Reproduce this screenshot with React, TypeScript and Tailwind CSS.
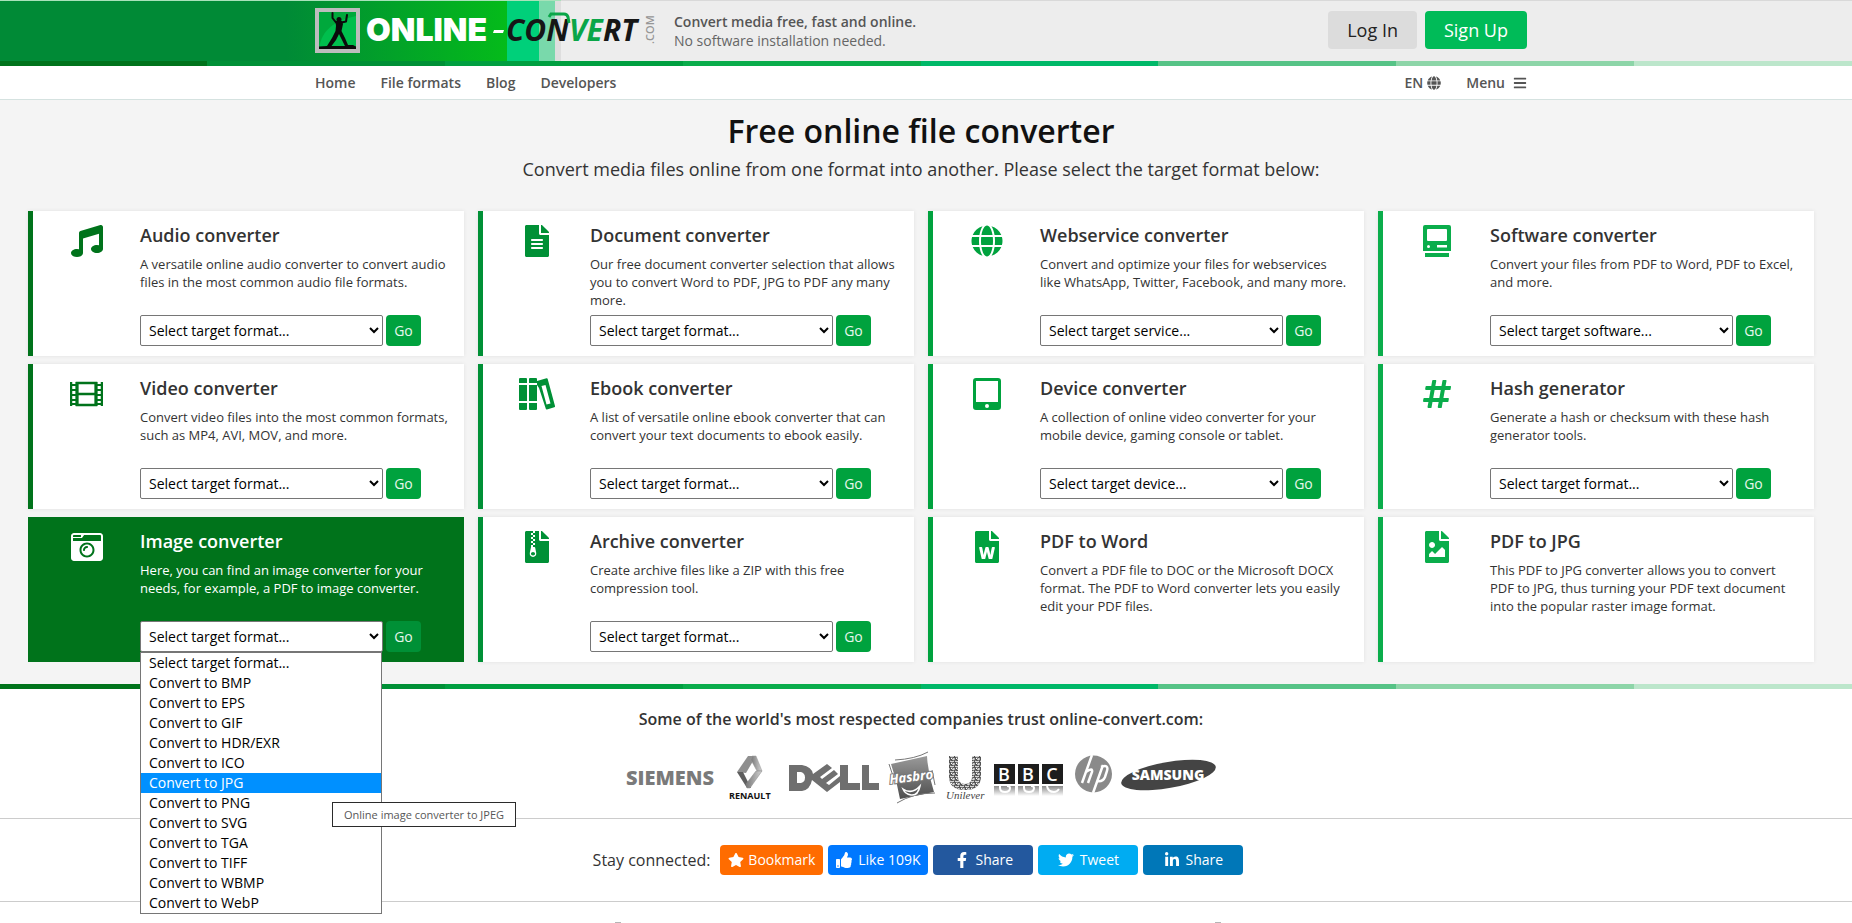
import React, { useState } from 'react';
import {
  FaBars,
  FaCameraRetro,
  FaFacebookF,
  FaFileAlt,
  FaFileArchive,
  FaFileImage,
  FaFileWord,
  FaGlobe,
  FaHashtag,
  FaLinkedinIn,
  FaMusic,
  FaStar,
  FaThumbsUp,
  FaTwitter,
} from 'react-icons/fa';

interface Converter {
  id: string;
  title: string;
  text: string;
  icon: React.ReactNode;
  placeholder?: string;
}

const FilmIcon = () => (
  <svg width="33" height="32" viewBox="0 0 33 32" fill="none" stroke="currentColor" strokeWidth="2">
    <path d="M1 4v24M32 4v24M7 5h19v22H7zM7 16h19" strokeWidth="2.500" />
    <path d="M7 4v24M26 4v24" strokeWidth="3" />
    <path d="M1 7h6M1 12h6M1 17h6M1 22h6M1 26h6M26 7h6M26 12h6M26 17h6M26 22h6M26 26h6" />
  </svg>
);

const BooksIcon = () => (
  <svg width="36" height="32" viewBox="0 0 36 32" fill="currentColor">
    <path d="M1 0h6a1 1 0 0 1 1 1v4H0V1a1 1 0 0 1 1-1zM0 7h8v16H0zM0 25h8v6a1 1 0 0 1-1 1H1a1 1 0 0 1-1-1z" />
    <path d="M11 0h6a1 1 0 0 1 1 1v4h-8V1a1 1 0 0 1 1-1zM10 7h8v16h-8zM10 25h8v6a1 1 0 0 1-1 1h-6a1 1 0 0 1-1-1z" />
    <path
      fillRule="evenodd"
      d="M18 3 27.500 0.300a1 1 0 0 1 1.200.700L36 28a1 1 0 0 1-.700 1.200L28 31.500a1 1 0 0 1-1.200-.700L20 10 18 7zM22.500 8l5 18.500 4-1.100L26.500 7z"
    />
  </svg>
);

const TabletIcon = () => (
  <svg width="28" height="32" viewBox="0 0 28 32" fill="currentColor">
    <path
      fillRule="evenodd"
      d="M3 0h22a3 3 0 0 1 3 3v26a3 3 0 0 1-3 3H3a3 3 0 0 1-3-3V3a3 3 0 0 1 3-3zM3 3v21h22V3zM14 26a2 2 0 1 0 0 4 2 2 0 0 0 0-4z"
    />
  </svg>
);

const ComputerIcon = () => (
  <svg width="28" height="32" viewBox="0 0 28 32" fill="currentColor">
    <path
      fillRule="evenodd"
      d="M2 0h24a2 2 0 0 1 2 2v24H0V2a2 2 0 0 1 2-2zM5 4a1 1 0 0 0-1 1v10a1 1 0 0 0 1 1h18a1 1 0 0 0 1-1V5a1 1 0 0 0-1-1zM5.500 20a1.500 1.500 0 1 0 0 3 1.500 1.500 0 0 0 0-3zM14 20v2.500h10V20z"
    />
    <path d="M2 28h24v4H2z" />
  </svg>
);

const columns: { bar: string; ink: string; items: Converter[] }[] = [
  {
    bar: 'border-[#00731b]',
    ink: 'text-[#00731b]',
    items: [
      {
        id: 'audio',
        title: 'Audio converter',
        text: 'A versatile online audio converter to convert audio files in the most common audio file formats.',
        icon: <FaMusic />,
        placeholder: 'Select target format...',
      },
      {
        id: 'video',
        title: 'Video converter',
        text: 'Convert video files into the most common formats, such as MP4, AVI, MOV, and more.',
        icon: <FilmIcon />,
        placeholder: 'Select target format...',
      },
      {
        id: 'image',
        title: 'Image converter',
        text: 'Here, you can find an image converter for your needs, for example, a PDF to image converter.',
        icon: <FaCameraRetro />,
        placeholder: 'Select target format...',
      },
    ],
  },
  {
    bar: 'border-[#009036]',
    ink: 'text-[#009036]',
    items: [
      {
        id: 'document',
        title: 'Document converter',
        text: 'Our free document converter selection that allows you to convert Word to PDF, JPG to PDF any many more.',
        icon: <FaFileAlt />,
        placeholder: 'Select target format...',
      },
      {
        id: 'ebook',
        title: 'Ebook converter',
        text: 'A list of versatile online ebook converter that can convert your text documents to ebook easily.',
        icon: <BooksIcon />,
        placeholder: 'Select target format...',
      },
      {
        id: 'archive',
        title: 'Archive converter',
        text: 'Create archive files like a ZIP with this free compression tool.',
        icon: <FaFileArchive />,
        placeholder: 'Select target format...',
      },
    ],
  },
  {
    bar: 'border-[#00a23e]',
    ink: 'text-[#00a23e]',
    items: [
      {
        id: 'webservice',
        title: 'Webservice converter',
        text: 'Convert and optimize your files for webservices like WhatsApp, Twitter, Facebook, and many more.',
        icon: <FaGlobe />,
        placeholder: 'Select target service...',
      },
      {
        id: 'device',
        title: 'Device converter',
        text: 'A collection of online video converter for your mobile device, gaming console or tablet.',
        icon: <TabletIcon />,
        placeholder: 'Select target device...',
      },
      {
        id: 'pdf-to-word',
        title: 'PDF to Word',
        text: 'Convert a PDF file to DOC or the Microsoft DOCX format. The PDF to Word converter lets you easily edit your PDF files.',
        icon: <FaFileWord />,
      },
    ],
  },
  {
    bar: 'border-[#0aad4b]',
    ink: 'text-[#0aad4b]',
    items: [
      {
        id: 'software',
        title: 'Software converter',
        text: 'Convert your files from PDF to Word, PDF to Excel, and more.',
        icon: <ComputerIcon />,
        placeholder: 'Select target software...',
      },
      {
        id: 'hash',
        title: 'Hash generator',
        text: 'Generate a hash or checksum with these hash generator tools.',
        icon: <FaHashtag />,
        placeholder: 'Select target format...',
      },
      {
        id: 'pdf-to-jpg',
        title: 'PDF to JPG',
        text: 'This PDF to JPG converter allows you to convert PDF to JPG, thus turning your PDF text document into the popular raster image format.',
        icon: <FaFileImage />,
      },
    ],
  },
];

const imageFormats = [
  'Select target format...',
  'Convert to BMP',
  'Convert to EPS',
  'Convert to GIF',
  'Convert to HDR/EXR',
  'Convert to ICO',
  'Convert to JPG',
  'Convert to PNG',
  'Convert to SVG',
  'Convert to TGA',
  'Convert to TIFF',
  'Convert to WBMP',
  'Convert to WebP',
];

const Stripe = () => (
  <div className="grid h-[5px] grid-cols-[207fr_repeat(6,238fr)_218fr]">
    <span className="bg-[#00731b]" />
    <span className="bg-[#009036]" />
    <span className="bg-[#009f40]" />
    <span className="bg-[#0aac4b]" />
    <span className="bg-[#00b868]" />
    <span className="bg-[#56c386]" />
    <span className="bg-[#8dd5a8]" />
    <span className="bg-[#bce6cb]" />
  </div>
);

const Logo = () => (
  <svg width="345" height="46" viewBox="0 0 345 46" role="img" aria-label="Online-Convert.com">
    <rect width="45" height="45" fill="#bdbdbd" />
    <rect x="4" y="4" width="37" height="37" fill="#00a83c" />
    <path d="M4 41C6 26 14 14 41 8v33z" fill="#00bf4d" />
    <circle cx="24" cy="11.500" r="2.500" fill="#0b0b0b" />
    <path
      d="M21 14.500 17.500 10 17.500 5M26.500 14.500 31 13.500 32 7"
      fill="none"
      stroke="#0b0b0b"
      strokeWidth="2"
      strokeLinecap="round"
      strokeLinejoin="round"
    />
    <path
      d="M20.500 13h6.500l1 3-1.500 7 3.500 7 3 7h5l3 1.500V41H4V38.500l8-.500 5-8 3.500-7 .500-5zM24 26l-3 6-4.500 6H30l-3-6z"
      fill="#0b0b0b"
      fillRule="evenodd"
    />
    <text x="51" y="33" fill="#fff" fontSize="32" fontFamily="Inter, sans-serif" fontWeight="900">
      ONLINE
    </text>
    <path d="M179 22h10l-1 3h-10z" fill="#fff" />
    <text
      x="191"
      y="33"
      fill="#161616"
      fontSize="30"
      fontFamily="'Open Sans', sans-serif"
      fontStyle="italic"
      fontWeight="700"
    >
      CON<tspan fill="#0aa648">VE</tspan>RT
    </text>
    <path d="M234 9l2-3h13q3 0 4 3l1 6" fill="none" stroke="#0aa648" strokeWidth="3" />
    <text
      transform="translate(339 36) rotate(-90)"
      fill="#969696"
      fontSize="11"
      fontFamily="'Open Sans', sans-serif"
      fontWeight="600"
    >
      .COM
    </text>
  </svg>
);

const FormatPopup = () => (
  <div className="absolute top-full left-0 z-10 w-[242px] border border-[#767676] bg-white text-black">
    <ul role="listbox" aria-label="Image target format">
      {imageFormats.map((format) => (
        <li
          key={format}
          role="option"
          aria-selected={format === 'Convert to JPG'}
          className={
            format === 'Convert to JPG'
              ? 'bg-[#0090ff] px-2 text-sm leading-5 text-white'
              : 'px-2 text-sm leading-5'
          }
        >
          {format}
        </li>
      ))}
    </ul>
    <div
      role="tooltip"
      className="absolute top-[149px] left-[191px] border border-[#2b2b2b] bg-white px-[11px] text-[11px] leading-[23px] whitespace-nowrap text-[#575757]"
    >
      Online image converter to JPEG
    </div>
  </div>
);

const Card: React.FC<{ item: Converter; bar: string; ink: string }> = ({ item, bar, ink }) => {
  const [target, setTarget] = useState('');
  const active = item.id === 'image';

  return (
    <section
      className={`flex h-[145px] border-l-[5px] ${bar} ${
        active ? 'bg-[#00731b] text-white' : 'bg-white text-[#333] shadow-[0_0_4px_rgba(0,0,0,0.08)]'
      }`}
    >
      <div
        className={`flex h-[60px] w-[107px] shrink-0 items-center justify-center text-[32px] ${
          active ? 'text-white' : ink
        }`}
      >
        {item.icon}
      </div>
      <div className="flex min-w-0 flex-1 flex-col pr-4">
        <h2 className="pt-3 text-lg leading-6 font-semibold">{item.title}</h2>
        <p className="mt-2 h-[60px] text-[13px] leading-[18px]">{item.text}</p>
        {item.placeholder && (
          <form className="flex gap-[3px]" onSubmit={(e) => e.preventDefault()}>
            <div className="relative">
              <select
                aria-label={item.title}
                value={target}
                onChange={(e) => setTarget(e.target.value)}
                className="h-[31px] w-[243px] rounded-xs border border-[#767676] bg-white px-1 text-sm text-black"
              >
                <option value="">{item.placeholder}</option>
              </select>
              {active && <FormatPopup />}
            </div>
            <button
              type="submit"
              className={`h-[31px] w-[35px] rounded text-sm font-medium text-[#e6f7ec] ${
                active ? 'bg-[#009036]' : 'bg-[#00a23e]'
              }`}
            >
              Go
            </button>
          </form>
        )}
      </div>
    </section>
  );
};

const CompanyLogos = () => (
  <svg width="592" height="54" viewBox="625 751 592 54" role="img" aria-label="Company logos">
    <defs>
      <linearGradient id="hasbro" x1="0" y1="0" x2="0" y2="1">
        <stop offset="0" stopColor="#9a9a9a" />
        <stop offset="1" stopColor="#4e4e4e" />
      </linearGradient>
      <linearGradient id="fade" x1="0" y1="0" x2="0" y2="1">
        <stop offset="0" stopColor="#8c8c8c" />
        <stop offset="1" stopColor="#fff" />
      </linearGradient>
      <linearGradient id="metal" x1="0" y1="0" x2="1" y2="0">
        <stop offset="0" stopColor="#777" />
        <stop offset="1" stopColor="#d2d2d2" />
      </linearGradient>
      <pattern id="curls" width="5" height="5" patternUnits="userSpaceOnUse">
        <path d="M0 1q2 2 4 0M1 3q1 2 3 1M4 3v2" stroke="#fff" strokeWidth="1" fill="none" />
      </pattern>
    </defs>

    <text x="626" y="785" fontSize="20" fontWeight="800" fill="#7a7a7a" fontFamily="'Open Sans', sans-serif">
      SIEMENS
    </text>

    <path d="M748 756h8l-10 17-9-1z" fill="#8f8f8f" />
    <path d="M737 772h6l8 16h-4z" fill="#5e5e5e" />
    <path d="M752 756h4l6 15h-5l-6-11z" fill="url(#metal)" stroke="#999" strokeWidth="0.500" />
    <path d="M762 771l-12 17h-3l-1-4 10-13z" fill="url(#metal)" stroke="#888" strokeWidth="0.500" />
    <text x="729" y="799" fontSize="9" fontWeight="700" fill="#111" fontFamily="'Open Sans', sans-serif">
      RENAULT
    </text>

    <g fill="#6f6f6f">
      <path
        fillRule="evenodd"
        d="M789 765h13q10 2 11 9l14-10 5 4-12 9 2 2 12-9 4 4-12 9 3 2 11-9v-11h8v18h12v7h-20v-8l-13 10-15-12q-2 10-10 11h-13zM797 772v11h4q4-1 4-5.500t-4-5.500z"
      />
      <path d="M862 765h7v18h10v7h-17z" />
    </g>

    <path d="M891 764l36-8q1 18 7 36l-34 7q-3-18-9-35z" fill="url(#hasbro)" />
    <path d="M895 760q20-1 33-8M897 803q16-10 38-10M889 764l5 15M932 770l3 15" stroke="#777" fill="none" />
    <text
      transform="translate(890 784) rotate(-7)"
      fontSize="13"
      fontStyle="italic"
      fontWeight="700"
      fill="#fff"
      stroke="#777"
      strokeWidth="2"
      paintOrder="stroke"
      fontFamily="'Open Sans', sans-serif"
    >
      Hasbro
    </text>
    <path d="M903 789q9 6 17-3-2 10-9 9-6-1-8-6z" fill="none" stroke="#fff" strokeWidth="1.500" />

    <path d="M949 756h9v21q0 7 7 7t7-7v-21h9v20q0 14-16 14t-16-14z" fill="#555" />
    <path d="M949 756h9v21q0 7 7 7t7-7v-21h9v20q0 14-16 14t-16-14z" fill="url(#curls)" />
    <text x="946" y="799" fontSize="11" fontStyle="italic" fill="#444" fontFamily="'Liberation Serif', serif">
      Unilever
    </text>

    <g fontSize="18" fontWeight="600" fill="#fff" fontFamily="'Open Sans', sans-serif" textAnchor="middle">
      <path d="M994 764h21v20h-21zM1018 764h21v20h-21zM1042 764h21v20h-21z" fill="#1d1d1d" />
      <path d="M994 786h21v10h-21zM1018 786h21v10h-21zM1042 786h21v10h-21z" fill="url(#fade)" />
      <text x="1004" y="781">
        B
      </text>
      <text x="1028" y="781">
        B
      </text>
      <text x="1052" y="781">
        C
      </text>
      <path
        d="M1000 786v2q0 4 5 4t5-4q0-2-3-2M1024 786v2q0 4 5 4t5-4q0-2-3-2M1047 786q1 6 7 6 3 0 5-3"
        fill="none"
        stroke="#fff"
        strokeWidth="2"
      />
    </g>

    <circle cx="1093.500" cy="774" r="18.500" fill="#8a8a8a" />
    <path
      d="M1092 755l-10 28M1086 772q7-5 6 0l-4 11M1103 765l-10 28M1101 767q8-3 6 4l-2 6q-2 5-8 4"
      stroke="#fff"
      strokeWidth="2.500"
      fill="none"
    />

    <ellipse cx="1168.500" cy="775" rx="48" ry="13" transform="rotate(-10 1168.500 775)" fill="#444" />
    <text
      x="1168"
      y="780"
      fontSize="14"
      fontWeight="800"
      fill="#fff"
      textAnchor="middle"
      fontFamily="'Open Sans', sans-serif"
    >
      SAMSUNG
    </text>
  </svg>
);

const shareButtons = [
  { label: 'Bookmark', icon: <FaStar />, style: 'w-[103px] gap-1 bg-[#ff6c00]' },
  { label: 'Like 109K', icon: <FaThumbsUp />, style: 'w-[100px] gap-[6px] bg-[#0078ff]' },
  { label: 'Share', icon: <FaFacebookF />, style: 'w-[100px] gap-[6px] bg-[#23589e]' },
  { label: 'Tweet', icon: <FaTwitter />, style: 'w-[100px] gap-[6px] bg-[#00acf2]' },
  { label: 'Share', icon: <FaLinkedinIn />, style: 'w-[100px] gap-[6px] bg-[#0077b8]' },
];

const App: React.FC = () => {
  return (
    <div className="min-h-screen bg-white font-['Open_Sans','Noto_Sans',sans-serif] text-[#333]">
      <header>
        <div className="h-px bg-[linear-gradient(90deg,#a8e2ba_calc(50%-365px),#d9d9d9_calc(50%-365px))]" />
        <div className="bg-[linear-gradient(90deg,#008a36_0,#008a36_calc(50%-640px),#04bb1a_calc(50%-419px),#00d07a_calc(50%-419px),#00d07a_calc(50%-387px),#79d9ab_calc(50%-387px),#79d9ab_calc(50%-371px),#dedede_calc(50%-371px),#dedede_calc(50%-365px),#ededed_calc(50%-365px))] pr-[10px]">
          <div className="mx-auto flex h-[60px] max-w-[1212px] items-center">
            <a href="#home" aria-label="Online-Convert.com">
              <Logo />
            </a>
            <p className="ml-[14px] text-sm leading-[19px] text-[#666]">
              <span className="block font-semibold text-[#555]">Convert media free, fast and online.</span>
              No software installation needed.
            </p>
            <div className="ml-auto flex gap-2 pb-[2px]">
              <button type="button" className="h-[38px] rounded bg-[#dcdcdc] px-[19px] text-lg text-[#222]">
                Log In
              </button>
              <button type="button" className="h-[38px] rounded bg-[#00bb58] px-[19px] text-lg font-medium text-white">
                Sign Up
              </button>
            </div>
          </div>
        </div>
        <Stripe />
        <div className="border-b border-[#d5e2e0] pr-[10px]">
          <nav className="mx-auto flex h-[33px] max-w-[1212px] items-center gap-[25px] text-sm font-semibold text-[#555]">
            <a href="#home">Home</a>
            <a href="#formats">File formats</a>
            <a href="#blog">Blog</a>
            <a href="#developers">Developers</a>
            <button type="button" className="ml-auto flex items-center gap-1">
              EN <FaGlobe />
            </button>
            <button type="button" className="flex items-center gap-2">
              Menu <FaBars />
            </button>
          </nav>
        </div>
      </header>

      <main className="bg-[#f4f4f4] pt-2 pr-[38px] pb-[22px] pl-7 text-center">
        <h1 className="text-[32px] leading-[46px] font-semibold text-[#111]">Free online file converter</h1>
        <p className="pb-[27px] text-lg leading-[30px]">
          Convert media files online from one format into another. Please select the target format below:
        </p>
        <div className="grid grid-cols-4 gap-[14px] text-left">
          {columns.map((column) => (
            <div key={column.bar} className="flex flex-col gap-2">
              {column.items.map((item) => (
                <Card key={item.id} item={item} bar={column.bar} ink={column.ink} />
              ))}
            </div>
          ))}
        </div>
      </main>
      <Stripe />

      <section className="flex flex-col items-center border-b border-[#ccc] pt-[17px] pr-[10px] pb-[13px]">
        <h2 className="pb-[19px] text-base leading-[26px] font-semibold">
          Some of the world's most respected companies trust online-convert.com:
        </h2>
        <CompanyLogos />
      </section>

      <section className="flex h-[83px] items-center justify-center gap-[5px] border-b border-[#ccc] pr-4">
        <span className="mr-[5px] text-base">Stay connected:</span>
        {shareButtons.map((button, index) => (
          <button
            key={index}
            type="button"
            className={`flex h-[30px] items-center justify-center rounded text-sm font-medium text-white ${button.style}`}
          >
            <span className="text-base">{button.icon}</span>
            {button.label}
          </button>
        ))}
      </section>

      <footer className="pt-5 pr-4">
        <div className="mx-auto flex max-w-[606px] justify-between">
          <span className="h-px w-[6px] bg-[#b5b5b5]" />
          <span className="h-px w-[6px] bg-[#b5b5b5]" />
        </div>
      </footer>
    </div>
  );
};

export default App;
